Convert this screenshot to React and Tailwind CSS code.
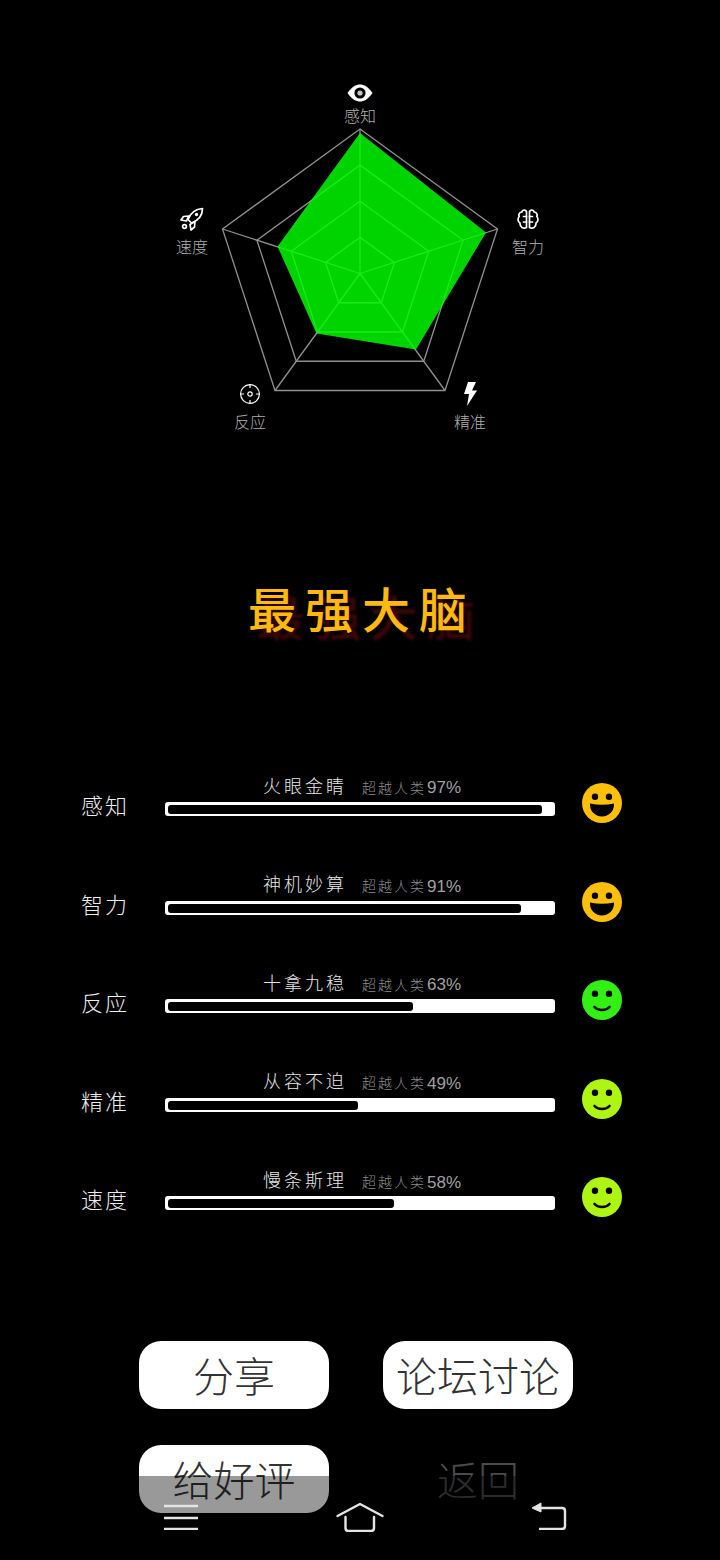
const cjk = "font-['Noto_Sans_CJK_SC','Noto_Sans',sans-serif] font-light";

const outer = [[360, 129], [497.5, 229], [445, 390.5], [275, 390.5], [222.5, 229]];
const center = [360, 273.5];

function ring(scale) {
  return outer
    .map(([x, y]) => `${center[0] + (x - center[0]) * scale},${center[1] + (y - center[1]) * scale}`)
    .join(" ");
}

const rows = [
  { label: "感知", title: "火眼金睛", pct: 97, end: 374, face: "big", color: "#fcbf0c" },
  { label: "智力", title: "神机妙算", pct: 91, end: 353, face: "big", color: "#fcbf0c" },
  { label: "反应", title: "十拿九稳", pct: 63, end: 245, face: "smile", color: "#33f014" },
  { label: "精准", title: "从容不迫", pct: 49, end: 190, face: "smile", color: "#aff514" },
  { label: "速度", title: "慢条斯理", pct: 58, end: 226, face: "smile", color: "#aff514" },
];

function Face({ type, color }) {
  return (
    <svg width="40" height="40" viewBox="0 0 40 40" className="shrink-0">
      <circle cx="20" cy="20" r="20" fill={color} />
      <circle cx="13" cy="13.7" r="3.2" fill="#000" />
      <circle cx="27" cy="13.7" r="3.2" fill="#000" />
      {type === "big" ? (
        <path d="M8 20.5 Q20 23 32 20.5 C32.5 28 27 33.5 20 33.5 C13 33.5 7.5 28 8 20.5 Z" fill="#000" />
      ) : (
        <path d="M12.5 27 C16 31 24 31 27.5 27" fill="none" stroke="#000" strokeWidth="2.6" strokeLinecap="round" />
      )}
    </svg>
  );
}

function EyeIcon() {
  return (
    <svg width="26" height="18" viewBox="0 0 26 18">
      <path d="M0.5 9 C5 2.5 9 0.5 13 0.5 C17 0.5 21 2.5 25.5 9 C21 15.5 17 17.5 13 17.5 C9 17.5 5 15.5 0.5 9 Z" fill="#fff" />
      <circle cx="13" cy="9" r="5.6" fill="#000" />
      <circle cx="13" cy="9" r="2.6" fill="#c4c4c4" />
    </svg>
  );
}

function BrainIcon() {
  return (
    <svg width="22" height="21" viewBox="0 0 22 21" fill="none" stroke="#fff" strokeWidth="1.7" strokeLinecap="round" strokeLinejoin="round">
      <path d="M9.5 2.5 C8.5 0.5 5.5 0.7 4.8 3 C2.5 3.2 1.2 5.5 2.2 7.5 C0.4 9.5 0.8 13 3 14 C2.8 17.5 6 20.5 9.5 18.5 Z" />
      <path d="M12.5 2.5 C13.5 0.5 16.5 0.7 17.2 3 C19.5 3.2 20.8 5.5 19.8 7.5 C21.6 9.5 21.2 13 19 14 C19.2 17.5 16 20.5 12.5 18.5 Z" />
      <path d="M6.5 7.5 H9.5 M6.5 13 H9.5 M12.5 7.5 H15.5 M12.5 13 H15.5" />
    </svg>
  );
}

function RocketIcon() {
  return (
    <svg width="24" height="24" viewBox="0 0 24 24" fill="none" stroke="#fff" strokeWidth="1.7" strokeLinejoin="round">
      <path d="M8 12.5 C10.5 6 15.5 2 22.5 1.5 C22.5 8.5 18 13.5 11.5 16 Z" />
      <circle cx="16.5" cy="7.5" r="1.7" fill="#fff" stroke="none" />
      <path d="M8.5 9 L3.5 9.5 L1 13 L6.5 14 Z" />
      <path d="M15 14.5 L14.5 20 L11 23 L10 17.5 Z" />
      <circle cx="4.5" cy="19.5" r="1.9" />
    </svg>
  );
}

function TargetIcon() {
  return (
    <svg width="20" height="20" viewBox="0 0 20 20" fill="none" stroke="#fff" strokeWidth="1.2">
      <circle cx="10" cy="10" r="9.4" />
      <circle cx="10" cy="10" r="2.2" />
      <path d="M10 0 V4 M10 16 V20 M0 10 H4 M16 10 H20" />
    </svg>
  );
}

function BoltIcon() {
  return (
    <svg width="14" height="24" viewBox="0 0 14 24">
      <path d="M5 0 H13 L9 8.5 H14 L4 24 L6 12 H1 Z" fill="#fff" />
    </svg>
  );
}

function RadarNode({ className, label, labelClass, children }) {
  return (
    <div className={`absolute w-[60px] flex flex-col items-center ${className}`}>
      <div className="h-[24px] flex items-center justify-center">{children}</div>
      <span className={`${cjk} ${labelClass} text-[16px] leading-[24px] text-[#b0b0b0]`}>{label}</span>
    </div>
  );
}

function Radar() {
  return (
    <div className="relative h-[440px] shrink-0">
      <svg width="720" height="440" viewBox="0 0 720 440" className="absolute left-0 top-0">
        {[0.25, 0.5, 0.75, 1].map((s) => (
          <polygon key={s} points={ring(s)} fill="none" stroke="#909090" strokeWidth="1.3" />
        ))}
        {outer.map(([x, y]) => (
          <line key={x} x1={center[0]} y1={center[1]} x2={x} y2={y} stroke="#909090" strokeWidth="1.3" />
        ))}
        <polygon points="360,133 486,232.5 416,349.5 316.5,333.5 277.5,246.5" fill="#00ff00" fillOpacity="0.83" />
      </svg>
      <RadarNode className="left-[330px] top-[81px]" labelClass="-mt-[2px]" label="感知"><EyeIcon /></RadarNode>
      <RadarNode className="left-[498px] top-[207px]" labelClass="mt-[3px]" label="智力"><BrainIcon /></RadarNode>
      <RadarNode className="left-[162px] top-[207px]" labelClass="mt-[3px]" label="速度"><RocketIcon /></RadarNode>
      <RadarNode className="left-[220px] top-[382px]" labelClass="mt-[3px]" label="反应"><TargetIcon /></RadarNode>
      <RadarNode className="left-[440px] top-[382px]" labelClass="mt-[3px]" label="精准"><BoltIcon /></RadarNode>
    </div>
  );
}

function StatRow({ row }) {
  return (
    <div className="flex h-[40px] items-start">
      <div className={`${cjk} w-[84px] h-[40px] pt-[3px] flex items-center text-[22px] tracking-[2px] text-[#ececec]`}>
        {row.label}
      </div>
      <div className="w-[390px] -mt-[8px]">
        <div className="h-[24px] pl-[98px] flex items-center">
          <span className={`${cjk} -mt-[4px] w-[99px] text-[18px] tracking-[3px] text-[#e6e6e6]`}>{row.title}</span>
          <span className={`${cjk} w-[65px] text-[14px] tracking-[2px] text-[#8c8c8c]`}>超越人类</span>
          <span className="mt-[2px] font-['Liberation_Sans',sans-serif] text-[17px] text-[#a0a0a0]">{row.pct}%</span>
        </div>
        <div className="mt-[3px] h-[14px] rounded-[3px] bg-white pl-[3px] pt-[3px]">
          <div className="h-[9px] rounded-[3px] bg-black" style={{ width: row.end }} />
        </div>
      </div>
      <div className="ml-[27px]">
        <Face type={row.face} color={row.color} />
      </div>
    </div>
  );
}

function ActionButton({ children, plain }) {
  return (
    <div
      className={`${cjk} h-[68px] pb-[2px] rounded-[22px] flex items-center justify-center text-[41px] ${
        plain ? "text-[#4a4a4a]" : "bg-white text-[#333333]"
      }`}
    >
      {children}
    </div>
  );
}

function NavBar() {
  return (
    <div className="absolute left-0 right-0 bottom-0 h-[84px] bg-black/40 flex items-start justify-between pl-[163px] pr-[153px] pt-[26px]">
      <svg width="36" height="28" viewBox="0 0 36 28" stroke="#e4e4e4" strokeWidth="2.4">
        <path d="M1 4 H35 M1 16 H35 M1 27 H35" />
      </svg>
      <svg width="48" height="30" viewBox="0 0 48 30" fill="none" stroke="#e4e4e4" strokeWidth="2.4" strokeLinejoin="round" strokeLinecap="round" className="mr-[10px]">
        <path d="M1.5 14 L24 2 L46.5 14" />
        <path d="M9.5 15 V26 Q9.5 29 12.5 29 H35 Q38 29 38 26 V15" />
      </svg>
      <svg width="36" height="28" viewBox="0 0 36 28" fill="none" stroke="#e4e4e4" strokeWidth="2.4" strokeLinejoin="round">
        <path d="M1 6 L10 1 V10 Z" fill="#e4e4e4" strokeWidth="1" />
        <path d="M9 6 H31 Q34 6 34 9 V24 Q34 27 31 27 H8" />
      </svg>
    </div>
  );
}

export default function App() {
  return (
    <div className="relative w-[720px] h-[1560px] overflow-hidden bg-black flex flex-col">
      <Radar />

      <div className="mt-[137px] h-[60px] flex items-center justify-center pl-[4px] font-['Noto_Sans_CJK_SC',sans-serif] font-medium text-[48px] leading-none tracking-[9px] text-[#ffb90f] [text-shadow:8px_8px_3px_#3d0808]">
        最强大脑
      </div>

      <div className="mt-[146px] pl-[81px] flex flex-col gap-[58.6px]">
        {rows.map((row) => (
          <StatRow key={row.label} row={row} />
        ))}
      </div>

      <div className="mt-[124px] pl-[139px] grid grid-cols-[190px_190px] gap-x-[54px] gap-y-[36px]">
        <ActionButton>分享</ActionButton>
        <ActionButton>论坛讨论</ActionButton>
        <ActionButton>给好评</ActionButton>
        <ActionButton plain>返回</ActionButton>
      </div>

      <NavBar />
    </div>
  );
}
